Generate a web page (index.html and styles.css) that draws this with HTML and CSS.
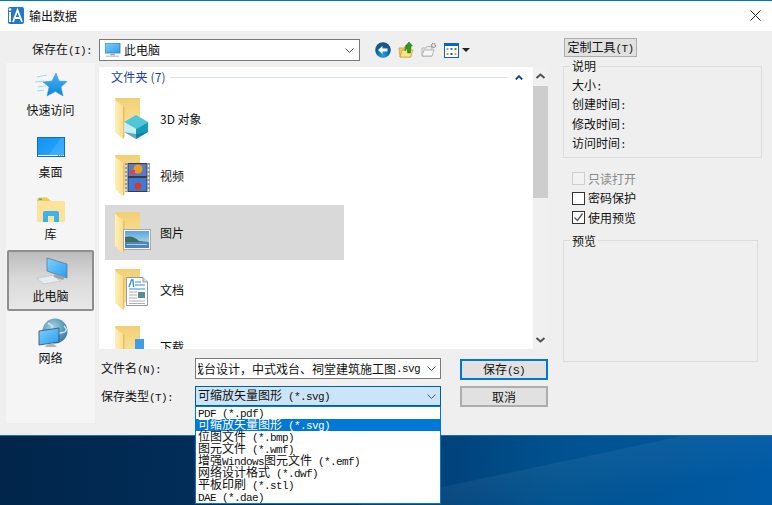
FILE: index.html
```html
<!DOCTYPE html>
<html lang="zh">
<head>
<meta charset="utf-8">
<title>输出数据</title>
<link rel="stylesheet" href="styles.css">
</head>
<body>
<svg class="defs" aria-hidden="true">
  <defs>
    <linearGradient id="gBack" x1="0" y1="0" x2="0" y2="1"><stop offset="0" stop-color="#f2cf74"/><stop offset="1" stop-color="#fbe59f"/></linearGradient>
    <linearGradient id="gLeaf" x1="0" y1="0" x2="1" y2="0"><stop offset="0" stop-color="#fff0b8"/><stop offset="1" stop-color="#fbdd8d"/></linearGradient>
    <linearGradient id="gScreen" x1="0" y1="0" x2="1" y2="1"><stop offset="0" stop-color="#7fd0ff"/><stop offset="1" stop-color="#2a9df0"/></linearGradient>
    <linearGradient id="gDesk" x1="0" y1="0" x2="1" y2="1"><stop offset="0" stop-color="#1593f2"/><stop offset="1" stop-color="#22a8ff"/></linearGradient>
    <linearGradient id="gStar" x1="0" y1="0" x2="0" y2="1"><stop offset="0" stop-color="#47b4f5"/><stop offset="1" stop-color="#0e84dc"/></linearGradient>
    <linearGradient id="gSky" x1="0" y1="0" x2="0" y2="1"><stop offset="0" stop-color="#5aa5dc"/><stop offset="1" stop-color="#cfe6f2"/></linearGradient>
    <radialGradient id="gGlobe" cx=".4" cy=".35" r=".8"><stop offset="0" stop-color="#a9d3e6"/><stop offset="1" stop-color="#1f6c9c"/></radialGradient>
    <radialGradient id="gBack2" cx=".5" cy=".8" r=".8"><stop offset="0" stop-color="#1fa5e6"/><stop offset=".55" stop-color="#0f5f9f"/><stop offset="1" stop-color="#1d4f80"/></radialGradient>
    <g id="folder">
      <path d="M2 1H27V34H8Z" fill="url(#gBack)"/>
      <path d="M2 3L10 9V42L2 35Z" fill="url(#gLeaf)"/>
      <path d="M10 9V42L11.500 40V10Z" fill="#e6c068"/>
    </g>
    <g id="monitor">
      <rect x="0" y="0" width="15" height="10" fill="url(#gScreen)" stroke="#2f7fb8" stroke-width=".8"/>
      <rect x="5" y="10.500" width="5" height="2" fill="#a8b4bc"/>
      <rect x="1" y="12.500" width="13" height="1.500" fill="#c4ccd2"/>
    </g>
  </defs>
</svg>
<div class="screen">
  <div class="dialog">
    <header class="titlebar">
      <svg class="app-icon" viewBox="0 0 16 17">
        <rect width="16" height="17" rx="2" fill="#1f78c8"/>
        <rect x="1" y="5" width="2" height="10" fill="#fff"/>
        <circle cx="2" cy="2.500" r="1.300" fill="#fff"/>
        <path d="M5 15L9.500 3L14 15M6.500 11H12.500" fill="none" stroke="#fff" stroke-width="1.800"/>
      </svg>
      <span class="title">输出数据</span>
      <svg class="close" viewBox="0 0 11 11"><path d="M.5.5L10.500 10.500M10.500.5L.5 10.500" stroke="#222" stroke-width="1" fill="none"/></svg>
    </header>
    <div class="body">
      <div class="left">
        <div class="toolbar">
          <label class="tb-label">保存在<span class="m">(I):</span></label>
          <div class="combo">
            <svg class="combo-pc" viewBox="0 0 16 15"><use href="#monitor"/></svg>
            <span class="combo-text">此电脑</span>
            <svg class="chev" viewBox="0 0 9 5"><path d="M.5.5L4.500 4.500L8.500.5" fill="none" stroke="#555" stroke-width="1"/></svg>
          </div>
          <div class="tools">
            <svg class="tool" viewBox="0 0 16 16">
              <circle cx="8" cy="8" r="7.800" fill="url(#gBack2)"/>
              <path d="M3 8L7.500 4V6.500H12.500V9.500H7.500V12Z" fill="#fff"/>
            </svg>
            <svg class="tool" viewBox="0 0 16 16">
              <path d="M1 6H6L7 4H13V15H2Z" fill="#eccb63" stroke="#c69c2c" stroke-width=".7"/>
              <path d="M2 15L4 8H15L12.500 15Z" fill="#fbe38a" stroke="#c69c2c" stroke-width=".7"/>
              <path d="M7 9C7 5 8 4 9 4H7.500L11 0L14.500 4H12.500V11H9.500V6C8.500 6 8 7 7 9Z" fill="#2e9a1f" stroke="#136b0f" stroke-width=".5"/>
            </svg>
            <svg class="tool tool-new" viewBox="0 0 16 16">
              <path d="M1 6H5L6 4.500H11V14H1Z" fill="#e9e9e9" stroke="#a8a8a8" stroke-width=".8"/>
              <path d="M1 14L3 8H13L11 14Z" fill="#f6f6f6" stroke="#a8a8a8" stroke-width=".8"/>
              <circle cx="12.500" cy="3.500" r="2" fill="#f0f0f0" stroke="#8a8a8a" stroke-width="1.400" stroke-dasharray="1.200 .6"/>
            </svg>
            <svg class="tool tool-view" viewBox="0 0 15 15">
              <rect x=".5" y=".5" width="14" height="14" fill="#fff" stroke="#0a62c4"/>
              <rect x="0" y="0" width="15" height="3" fill="#0a62c4"/>
              <rect x="2.500" y="5" width="2" height="2" fill="#8e9ac8"/><rect x="6.500" y="5" width="2" height="2" fill="#3b6fd0"/><rect x="10.500" y="5" width="2" height="2" fill="#1ea34a"/>
              <rect x="2.500" y="10" width="2" height="2" fill="#ef7d52"/><rect x="6.500" y="10" width="2" height="2" fill="#1c4fa8"/><rect x="10.500" y="10" width="2" height="2" fill="#e4a11f"/>
            </svg>
            <span class="caret"></span>
          </div>
        </div>
        <div class="main">
          <aside class="places">
            <div class="place">
              <svg class="place-icon" viewBox="0 0 34 30">
                <path d="M3 7L13 5M1 12L10 11M4 17L12 16M3 21L10 20" stroke="#a8d8f6" stroke-width="1.200" fill="none"/>
                <path d="M22 3L25 11L33 11.500L27 17L29 26L21.500 21.500L13 26L15 17L9 12L18 11Z" fill="url(#gStar)" stroke="#2a95e0" stroke-width=".5"/>
              </svg>
              <span>快速访问</span>
            </div>
            <div class="place">
              <svg class="place-icon" viewBox="0 0 34 30">
                <rect x="3.500" y="5.500" width="27" height="19" fill="url(#gDesk)" stroke="#0b73bd"/>
                <path d="M14 24L27 6H30V24Z" fill="#fff" opacity=".12"/>
                <path d="M4 23.500H30" stroke="#fff" stroke-width="1" stroke-dasharray="20 1 1 1 1 1 1 1"/>
              </svg>
              <span>桌面</span>
            </div>
            <div class="place">
              <svg class="place-icon" viewBox="0 0 34 30">
                <path d="M3 6Q3 3.500 5 3.500H13L17 7V9H3Z" fill="#f5c94c"/>
                <rect x="5" y="4.500" width="3" height="1.500" fill="#3aa9ea"/>
                <rect x="3" y="7" width="28" height="21" rx="1" fill="#fbe49a"/>
                <path d="M9 28V19Q9 17 11 17H23Q25 17 25 19V28H20V22H14V28Z" fill="#3eb2ee"/>
              </svg>
              <span>库</span>
            </div>
            <div class="place is-selected">
              <svg class="place-icon" viewBox="0 0 34 30">
                <path d="M13 2L33 8V22L13 15Z" fill="url(#gScreen)" stroke="#5b7d92" stroke-width=".8"/>
                <path d="M21 18L31 21L29 24L19 21Z" fill="#9aa3aa"/>
                <path d="M3 22L18 19.500L27 25L10 28Z" fill="#e9ecee" stroke="#9ea6ab" stroke-width=".6" stroke-dasharray="1 .6"/>
              </svg>
              <span>此电脑</span>
            </div>
            <div class="place">
              <svg class="place-icon" viewBox="0 0 34 30">
                <circle cx="21" cy="13" r="12.500" fill="url(#gGlobe)"/>
                <path d="M14 5Q20 8 18 12T26 15T30 8" fill="none" stroke="#cfe6f0" stroke-width="1.500"/>
                <path d="M5 13L25 10V24L5 27Z" fill="url(#gScreen)" stroke="#44596a" stroke-width=".9"/>
                <path d="M13 26.500L19 25.500L23 29H11Z" fill="#aeb6bc"/>
              </svg>
              <span>网络</span>
            </div>
          </aside>
          <div class="center">
            <div class="list">
              <div class="files">
                <div class="group-head">
                  <span class="group-title">文件夹 (7)</span>
                  <span class="group-line"></span>
                  <svg class="group-chev" viewBox="0 0 8 5"><path d="M.8 4.500L4 1.200L7.200 4.500" fill="none" stroke="#0a3c9c" stroke-width="1.800"/></svg>
                </div>
                <div class="file">
                  <svg class="thumb" viewBox="0 0 38 44">
                    <use href="#folder"/>
                    <path d="M11 25L23 18L35 25L23 32Z" fill="#4fc6d8"/>
                    <path d="M11 25L23 32V42L11 35Z" fill="#c8eef2"/>
                    <path d="M35 25L23 32V42L35 35Z" fill="#139cb6"/>
                    <path d="M23 37L35 35L23 42L11 35Z" fill="#0d6f8e" opacity=".55"/>
                  </svg>
                  <span>3D 对象</span>
                </div>
                <div class="file">
                  <svg class="thumb" viewBox="0 0 38 44">
                    <use href="#folder"/>
                    <rect x="12" y="9" width="25" height="29" fill="#3c3c3c"/>
                    <rect x="12" y="9" width="3" height="29" fill="#9a9a9a"/>
                    <rect x="34" y="9" width="3" height="29" fill="#9a9a9a"/>
                    <path d="M13 11V37M35.500 11V37" stroke="#eee" stroke-width="1.500" stroke-dasharray="2 2"/>
                    <rect x="15.500" y="10" width="18" height="12" fill="#5b79c4"/>
                    <rect x="15.500" y="24" width="18" height="13" fill="#3f7bd6"/>
                    <circle cx="25" cy="15" r="4.500" fill="#e8a020"/>
                    <rect x="17" y="16" width="5" height="4" fill="#d8445e"/>
                    <circle cx="25" cy="32" r="3.500" fill="#d6382f"/>
                  </svg>
                  <span>视频</span>
                </div>
                <div class="file is-selected">
                  <svg class="thumb" viewBox="0 0 38 44">
                    <use href="#folder"/>
                    <rect x="10.500" y="18.500" width="27" height="20" fill="#f4f4f4" stroke="#a9a9a9"/>
                    <rect x="12" y="20" width="24" height="17" fill="url(#gSky)"/>
                    <path d="M12 26Q20 24 26 30L36 31V37H12Z" fill="#3e6f62"/>
                    <rect x="12" y="31" width="24" height="6" fill="#4f86b4"/>
                    <rect x="14" y="33" width="20" height="1" fill="#a9cbe0"/>
                  </svg>
                  <span>图片</span>
                </div>
                <div class="file">
                  <svg class="thumb" viewBox="0 0 38 44">
                    <use href="#folder"/>
                    <path d="M13.500 9.500H30L34.500 14V37.500H13.500Z" fill="#fff" stroke="#999"/>
                    <path d="M30 9.500V14H34.500" fill="#dde2e6" stroke="#999"/>
                    <path d="M16 19L18.500 12H20L20.500 19" fill="none" stroke="#2b8fe0" stroke-width="1.300"/>
                    <path d="M22 14H28M22 17H32M16 21H32" stroke="#2b8fe0" stroke-width="1"/>
                    <path d="M16 24H24M16 27H24M16 30H24M16 33H32M16 35.500H32" stroke="#aab0b5" stroke-width="1"/>
                    <rect x="25" y="24" width="7" height="6" fill="#5b8a96"/>
                  </svg>
                  <span>文档</span>
                </div>
                <div class="file">
                  <svg class="thumb" viewBox="0 0 38 44">
                    <use href="#folder"/>
                    <rect x="22" y="14" width="9" height="20" fill="#3f9ee8"/>
                  </svg>
                  <span>下载</span>
                </div>
              </div>
              <div class="vscroll">
                <svg class="sb-arrow" viewBox="0 0 15 19"><path d="M3.500 11L7.500 7.500L11.500 11" fill="none" stroke="#505050" stroke-width="2"/></svg>
                <div class="thumb-bar"></div>
                <div class="sb-space"></div>
                <svg class="sb-arrow" viewBox="0 0 15 19"><path d="M3.500 8L7.500 11.500L11.500 8" fill="none" stroke="#505050" stroke-width="2"/></svg>
              </div>
            </div>
            <div class="form">
              <label class="form-label">文件名<span class="m">(N):</span></label>
              <div class="field">
                <span class="field-text">戏台设计，中式戏台、祠堂建筑施工图<span class="m">.svg</span></span>
                <svg class="chev" viewBox="0 0 9 5"><path d="M.5.5L4.500 4.500L8.500.5" fill="none" stroke="#555" stroke-width="1"/></svg>
              </div>
              <span></span>
              <button class="btn btn-default" type="button">保存<span class="m">(S)</span></button>
              <label class="form-label">保存类型<span class="m">(T):</span></label>
              <div class="select-wrap">
                <div class="select">
                  <span>可缩放矢量图形<span class="m"> (*.svg)</span></span>
                  <svg class="chev" viewBox="0 0 9 5"><path d="M.5.5L4.500 4.500L8.500.5" fill="none" stroke="#555" stroke-width="1"/></svg>
                </div>
                <ul class="dropdown">
                  <li><span class="m">PDF (*.pdf)</span></li>
                  <li class="is-active">可缩放矢量图形<span class="m"> (*.svg)</span></li>
                  <li>位图文件<span class="m"> (*.bmp)</span></li>
                  <li>图元文件<span class="m"> (*.wmf)</span></li>
                  <li>增强<span class="m">Windows</span>图元文件<span class="m"> (*.emf)</span></li>
                  <li>网络设计格式<span class="m"> (*.dwf)</span></li>
                  <li>平板印刷<span class="m"> (*.stl)</span></li>
                  <li><span class="m">DAE (*.dae)</span></li>
                </ul>
              </div>
              <span></span>
              <button class="btn" type="button">取消</button>
            </div>
          </div>
        </div>
      </div>
      <div class="right">
        <button class="btn btn-tool" type="button">定制工具<span class="m">(T)</span></button>
        <fieldset class="group group-info">
          <legend>说明</legend>
          <div class="info-row">大小<span class="m">:</span></div>
          <div class="info-row">创建时间<span class="m">:</span></div>
          <div class="info-row">修改时间<span class="m">:</span></div>
          <div class="info-row">访问时间<span class="m">:</span></div>
        </fieldset>
        <div class="checks">
          <div class="check is-disabled"><span class="box"></span>只读打开</div>
          <div class="check"><span class="box"></span>密码保护</div>
          <div class="check"><span class="box"><svg viewBox="0 0 11 11"><path d="M1.500 5.500L4.500 8.500L9.500 1.500" fill="none" stroke="#555" stroke-width="1.300"/></svg></span>使用预览</div>
        </div>
        <fieldset class="group group-preview">
          <legend>预览</legend>
        </fieldset>
      </div>
    </div>
  </div>
  <div class="desktop"></div>
</div>
</body>
</html>
```

FILE: styles.css
```css
* { box-sizing: border-box; }
html, body { margin: 0; padding: 0; }
body {
  width: 772px;
  height: 505px;
  overflow: hidden;
  font-family: "Noto Sans CJK SC", "Liberation Sans", sans-serif;
  font-size: 12px;
  line-height: 16px;
  color: #111;
}
.defs { display: block; width: 0; height: 0; overflow: hidden; }
.m { font-family: "Liberation Mono", "DejaVu Sans Mono", monospace; font-size: 11px; letter-spacing: -.6px; white-space: pre; }

.screen { display: flex; flex-direction: column; width: 772px; height: 505px; }
.dialog {
  height: 436px;
  flex: none;
  display: flex;
  flex-direction: column;
  border-top: 1px solid #0078d7;
  border-bottom: 1px solid #1a6fbb;
  background: #efefef;
}
.desktop {
  flex: 1;
  background:
    linear-gradient(168deg, transparent 62%, rgba(255,255,255,.05) 62.5%, transparent 85%),
    linear-gradient(92deg, #01254a 0%, #012d58 25%, #013c73 52%, #00528f 72%, #005aa5 100%);
}

.titlebar { height: 30px; flex: none; display: flex; align-items: center; padding: 0 11px 1px 8px; background: #fff; }
.app-icon { width: 16px; height: 17px; flex: none; }
.title { margin-left: 5px; flex: 1; }
.close { width: 11px; height: 11px; flex: none; }

.body { flex: 1; display: flex; padding-left: 6px; min-height: 0; }
.left { width: 557px; flex: none; }
.right { flex: 1; padding-top: 7px; }

.toolbar { display: flex; align-items: center; height: 22px; margin-top: 8px; margin-bottom: 2px; padding-left: 26px; }
.tb-label { width: 67px; flex: none; }
.combo {
  width: 261px;
  height: 22px;
  flex: none;
  display: flex;
  align-items: center;
  padding: 0 5px;
  background: #fff;
  border: 1px solid #7a7a7a;
}
.combo-pc { width: 16px; height: 15px; flex: none; }
.combo-text { margin-left: 3px; flex: 1; }
.chev { width: 9px; height: 5px; flex: none; }
.tools { display: flex; align-items: center; margin-left: 15px; }
.tool { width: 16px; height: 16px; flex: none; margin-right: 7px; }
.tool-view { width: 15px; height: 15px; margin-right: 3px; }
.caret { width: 0; height: 0; border: 4px solid transparent; border-top: 4px solid #222; border-bottom: 0; }

.main { display: flex; }
.places { width: 89px; height: 360px; flex: none; padding: 1px 1px 0; background: #f5f5f5; }
.place {
  height: 61px;
  margin-bottom: 1px;
  display: flex;
  flex-direction: column;
  align-items: center;
  gap: 2px;
  padding-top: 4px;
  border: 2px solid transparent;
  border-radius: 2px;
}
.place-icon { width: 34px; height: 30px; flex: none; }
.place.is-selected { border-color: #8e8e8e; background: linear-gradient(#bcbcbc, #d8d8d8 45%, #e8e8e8); }

.center { margin-left: 4px; margin-top: 4px; width: 449px; }
.list { display: flex; height: 282px; background: #fff; overflow: hidden; }
.files { flex: 1; min-width: 0; overflow: hidden; }
.group-head { display: flex; align-items: center; height: 24px; padding: 0 10px 4px 12px; }
.group-title { color: #1a3fa8; letter-spacing: .2px; }
.group-line { flex: 1; height: 1px; background: #d8e2e8; margin: 0 8px 0 4px; }
.group-chev { width: 8px; height: 5px; flex: none; }
.file {
  width: 239px;
  height: 55px;
  margin: 0 0 2px 6px;
  display: flex;
  align-items: center;
  gap: 9px;
  padding-left: 8px;
}
.file.is-selected { background: #d9d9d9; }
.thumb { width: 38px; height: 44px; flex: none; }

.vscroll { width: 15px; flex: none; display: flex; flex-direction: column; background: #f0f0f0; }
.sb-arrow { width: 15px; height: 19px; flex: none; }
.thumb-bar { height: 112px; flex: none; background: #cdcdcd; }
.sb-space { flex: 1; }

.form { display: grid; grid-template-columns: 96px 246px 19px 88px; grid-template-rows: 21px 21px; row-gap: 7px; margin-top: 9px; }
.form-label { padding-left: 2px; align-self: center; }
.field {
  display: flex;
  align-items: center;
  border: 1px solid #7a7a7a;
  background: #fff;
  padding: 0 4px 0 2px;
}
.field-text { flex: 1; min-width: 0; overflow: hidden; white-space: nowrap; display: flex; justify-content: flex-end; padding-right: 7px; }
.select-wrap { position: relative; }
.select {
  height: 20px;
  display: flex;
  align-items: center;
  justify-content: space-between;
  padding: 0 4px 0 2px;
  border: 1px solid #005ea8;
  background: #cce4f7;
}
.dropdown {
  position: absolute;
  left: 0;
  top: 20px;
  width: 246px;
  height: 98px;
  margin: 0;
  padding: 0;
  list-style: none;
  background: #fff;
  border: 1px solid #0078d7;
  z-index: 2;
}
.dropdown li { height: 12px; line-height: 10px; padding-left: 2px; white-space: nowrap; overflow: visible; }
.dropdown li.is-active { background: #0078d7; color: #fff; }

.btn {
  height: 21px;
  padding: 0;
  font: inherit;
  color: #111;
  background: #e1e1e1;
  border: 2px solid #adadad;
}
.btn-default { border-color: #0078d7; margin-top: 1px; }
.btn-tool { display: block; width: 73px; height: 19px; margin-left: 1px; border-width: 1px; line-height: 15px; }

.group { margin: 2px 0 0; padding: 0; border: 1px solid #dcdcdc; min-width: 0; }
.group legend { margin-left: 6px; padding: 0 2px; line-height: 14px; }
.group-info { width: 199px; height: 99px; padding-top: 2px; }
.group-preview { width: 195px; height: 128px; margin-top: 6px; }
.info-row { height: 19.4px; line-height: 19.4px; padding-left: 8px; }

.checks { margin-top: 11px; padding-left: 9px; }
.check { height: 19.5px; display: flex; align-items: center; gap: 3px; }
.box { width: 13px; height: 13px; flex: none; border: 1px solid #333; background: #fff; display: block; }
.box svg { display: block; width: 11px; height: 11px; }
.is-disabled { color: #8a8a8a; }
.is-disabled .box { border-color: #cfcfcf; background: #f2f2f2; }
```
